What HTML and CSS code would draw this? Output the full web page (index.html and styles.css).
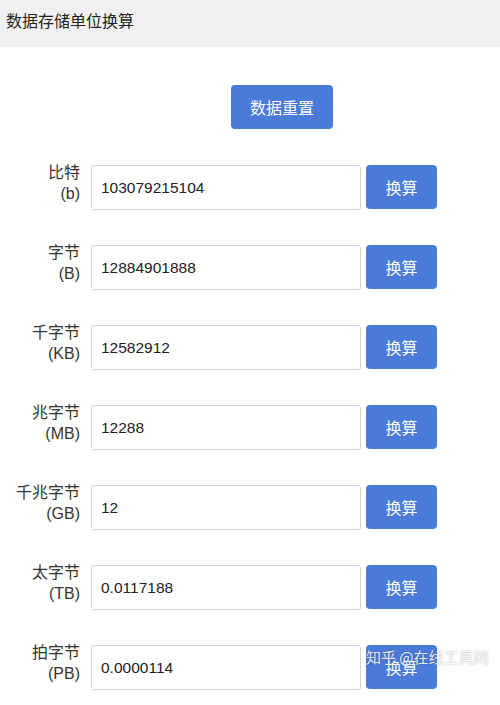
FILE: index.html
```html
<!DOCTYPE html>
<html lang="zh">
<head>
<meta charset="utf-8">
<link rel="stylesheet" href="styles.css">
</head>
<body>
<div class="header">数据存储单位换算</div>
<div class="main">
  <div class="reset-wrap"><button class="btn reset">数据重置</button></div>
  <div class="row"><div class="label">比特<br>(b)</div><div class="input">103079215104</div><button class="btn conv">换算</button></div>
  <div class="row"><div class="label">字节<br>(B)</div><div class="input">12884901888</div><button class="btn conv">换算</button></div>
  <div class="row"><div class="label">千字节<br>(KB)</div><div class="input">12582912</div><button class="btn conv">换算</button></div>
  <div class="row"><div class="label">兆字节<br>(MB)</div><div class="input">12288</div><button class="btn conv">换算</button></div>
  <div class="row"><div class="label">千兆字节<br>(GB)</div><div class="input">12</div><button class="btn conv">换算</button></div>
  <div class="row"><div class="label">太字节<br>(TB)</div><div class="input">0.0117188</div><button class="btn conv">换算</button></div>
  <div class="row"><div class="label">拍字节<br>(PB)</div><div class="input">0.0000114</div><button class="btn conv">换算</button></div>
</div>
<div class="watermark">知乎 @在线工具网</div>
</body>
</html>
```
FILE: styles.css
```css
html, body { margin: 0; padding: 0; background: #fff; }
body {
  font-family: "Liberation Sans", "Noto Sans CJK SC", sans-serif;
  color: #333;
  width: 500px; height: 705px; overflow: hidden; position: relative;
}
.header {
  height: 47px;
  background: #f1f1f1;
  padding-left: 6px;
  font-size: 16px;
  line-height: 40px;
  color: #222;
  font-family: "Noto Sans CJK SC", sans-serif;
}
.main { padding-top: 38px; }
.reset-wrap { padding-left: 231px; margin-bottom: 36px; }
.btn {
  border: none;
  background: #4a7bd8;
  color: #fff;
  font-family: "Noto Sans CJK SC", sans-serif;
  font-size: 16px;
  border-radius: 4px;
  padding: 0;
  cursor: pointer;
}
.reset { width: 102px; height: 44px; }
.row {
  display: flex;
  align-items: flex-start;
  height: 80px;
}
.label {
  width: 80px;
  text-align: right;
  font-size: 16px;
  line-height: 21px;
  margin-top: -3px;
  color: #333;
  margin-right: 11px;
  flex: none;
}
.input {
  box-sizing: border-box;
  width: 270px;
  height: 45px;
  border: 1px solid #d4d4d4;
  border-radius: 3px;
  padding-left: 9px;
  font-size: 15.5px;
  line-height: 43px;
  color: #222;
  flex: none;
}
.conv { width: 71px; height: 44px; margin-left: 5px; flex: none; }
.watermark {
  position: absolute;
  left: 366px;
  top: 646px;
  font-family: "Noto Sans CJK SC", sans-serif;
  font-size: 15px;
  color: rgba(255,255,255,0.9);
  text-shadow: 0 0 2px rgba(0,0,0,0.35);
}
```
